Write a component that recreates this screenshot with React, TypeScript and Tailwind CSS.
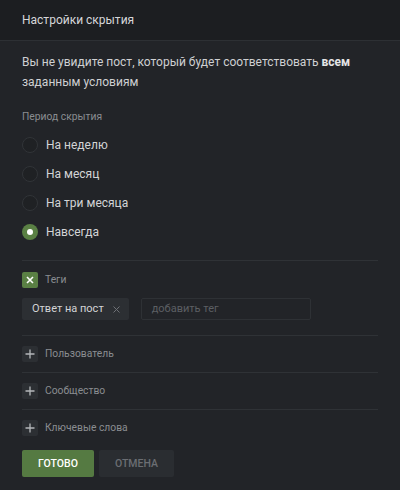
const periods = ['На неделю', 'На месяц', 'На три месяца', 'Навсегда']

function PlusBox() {
  return (
    <span className="flex h-[16px] w-[16px] items-center justify-center rounded-[2px] bg-[#2c2f33]">
      <svg width="10" height="10" viewBox="0 0 10 10">
        <path d="M5 0.5v9M0.5 5h9" stroke="#b4b7bb" strokeWidth="1.3" />
      </svg>
    </span>
  )
}

function Section({ label }: { label: string }) {
  return (
    <div className="flex h-[37px] items-center gap-[7px] border-t border-[#2f3236]">
      <PlusBox />
      <span className="text-[10.3px] text-[#8a8d91]">{label}</span>
    </div>
  )
}

export default function App() {
  const selected = 3
  return (
    <div className="h-[490px] w-[400px] bg-[#222428]" style={{ fontFamily: 'Roboto, "Noto Sans", sans-serif' }}>
      <div className="flex h-[41px] items-center border-b border-[#2d3034] bg-[#1c1e21] px-[22px] text-[12px] text-[#d6d7d9]">
        Настройки скрытия
      </div>
      <div className="px-[22px]">
        <p className="pt-[11px] text-[12px] leading-[20px] text-[#cfd0d2]">
          Вы не увидите пост, который будет соответствовать <b className="font-bold text-[#e4e5e6]">всем</b> заданным условиям
        </p>
        <div className="mt-[18px] text-[10.3px] leading-[14px] text-[#8a8d91]">Период скрытия</div>
        <div className="mt-[6px] flex flex-col">
          {periods.map((p, i) => (
            <div key={p} className="flex h-[29px] items-center gap-[8px]">
              {i === selected ? (
                <span className="flex h-[16px] w-[16px] items-center justify-center rounded-full bg-[#5a8044]">
                  <span className="h-[6px] w-[6px] rounded-full bg-white" />
                </span>
              ) : (
                <span className="h-[16px] w-[16px] rounded-full border border-[#313438] bg-[#1f2124]" />
              )}
              <span className="text-[12px] text-[#d3d4d6]">{p}</span>
            </div>
          ))}
        </div>
        <div className="mt-[14px] border-t border-[#2f3236] pb-[15px]">
          <div className="flex h-[37px] items-center gap-[7px]">
            <span className="flex h-[16px] w-[16px] items-center justify-center rounded-[2px] bg-[#5a8044]">
              <svg width="8" height="8" viewBox="0 0 8 8">
                <path d="M1 1l6 6M7 1l-6 6" stroke="#ffffff" strokeWidth="1.6" />
              </svg>
            </span>
            <span className="text-[10.3px] text-[#8a8d91]">Теги</span>
          </div>
          <div className="flex items-center gap-[12px]">
            <span className="flex h-[22px] items-center gap-[9px] rounded-[2px] bg-[#2c2f33] pl-[10px] pr-[9px] text-[11px] text-[#d3d4d6]">
              Ответ на пост
              <svg width="7" height="7" viewBox="0 0 7 7">
                <path d="M0.5 0.5l6 6M6.5 0.5l-6 6" stroke="#6e7176" strokeWidth="1" />
              </svg>
            </span>
            <div className="flex h-[22px] w-[170px] items-center rounded-[2px] border border-[#2e3135] px-[10px] text-[11px] text-[#5c5f63]">
              добавить тег
            </div>
          </div>
        </div>
        <Section label="Пользователь" />
        <Section label="Сообщество" />
        <Section label="Ключевые слова" />
        <div className="mt-[4px] flex gap-[5px]">
          <button className="h-[27px] w-[72px] rounded-[2px] bg-[#557a42] text-[10.5px] font-medium text-white">ГОТОВО</button>
          <button className="h-[27px] w-[75px] rounded-[2px] bg-[#2a2d31] text-[10.5px] font-medium text-[#6b6e73]">ОТМЕНА</button>
        </div>
      </div>
    </div>
  )
}
